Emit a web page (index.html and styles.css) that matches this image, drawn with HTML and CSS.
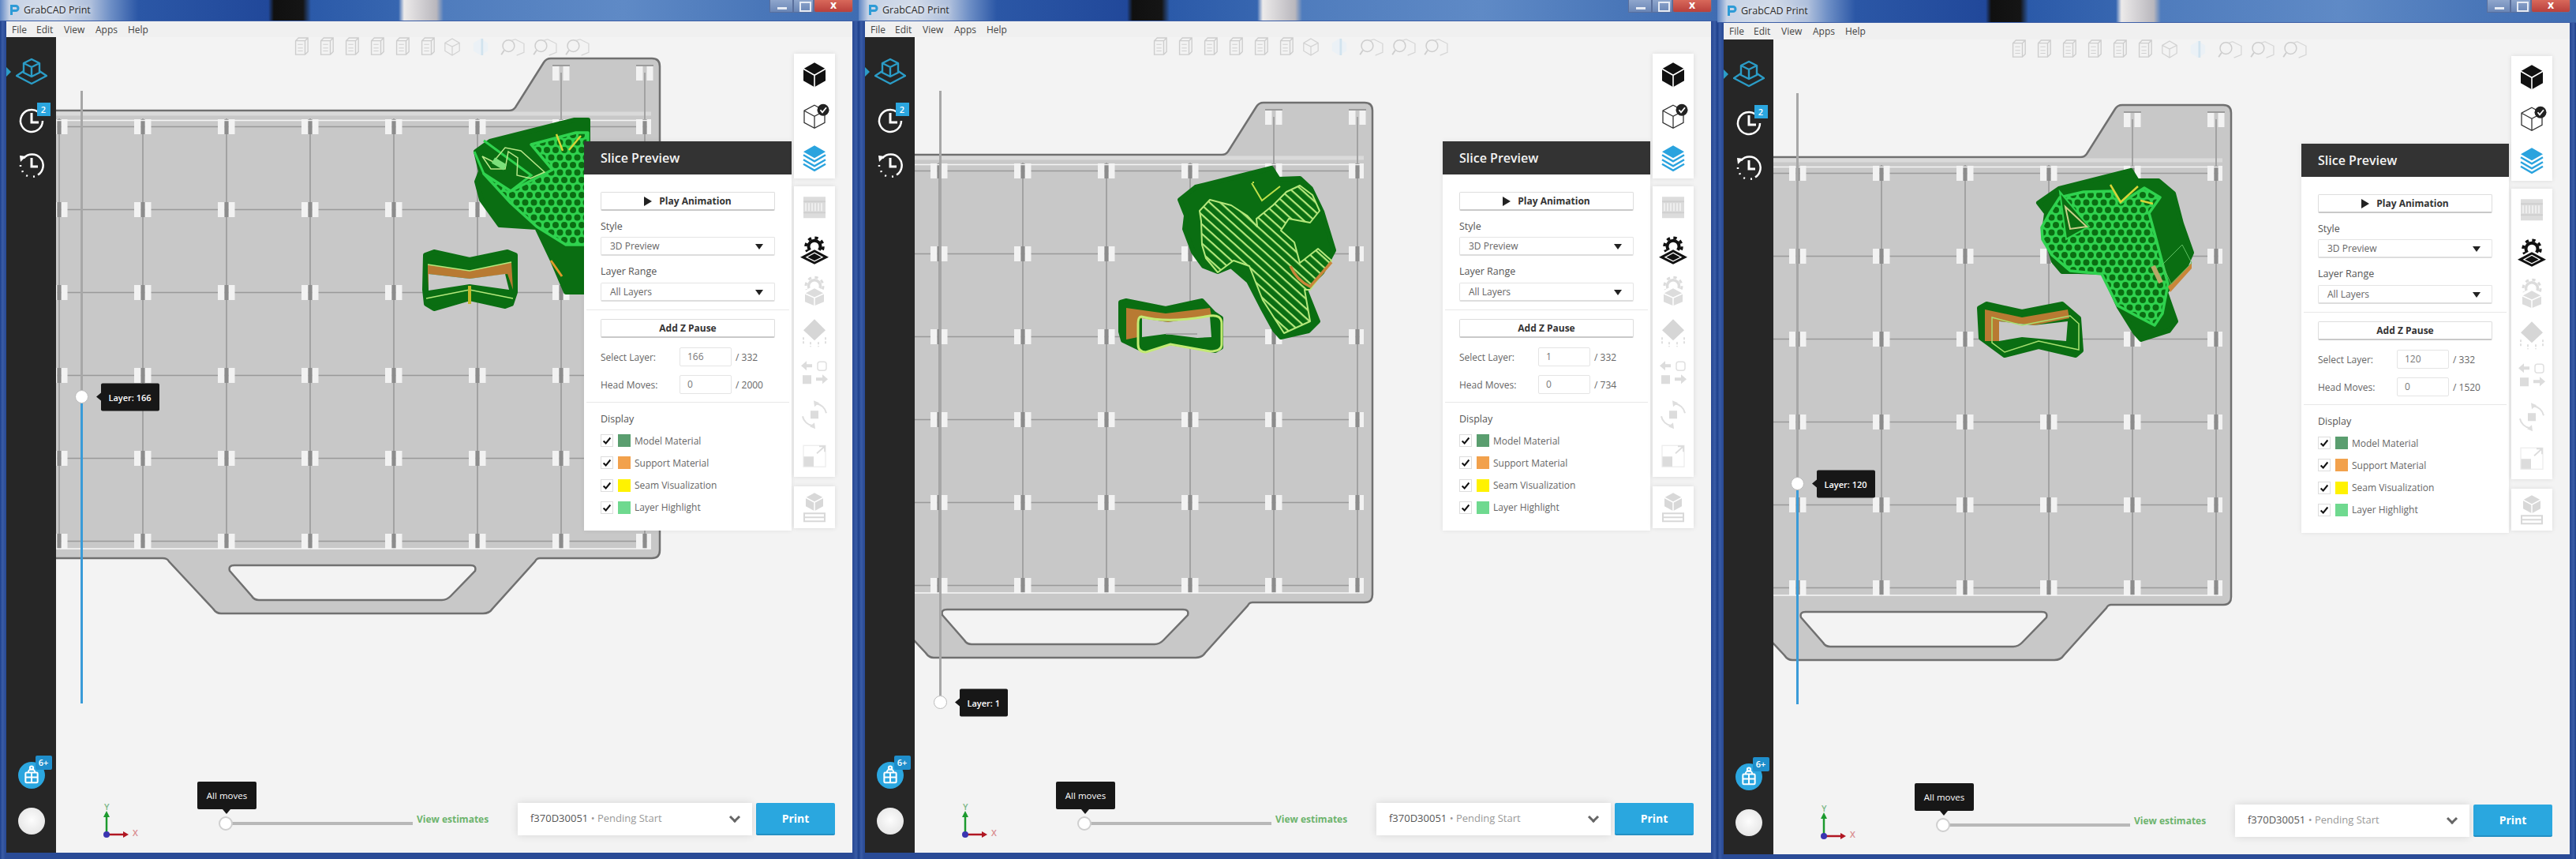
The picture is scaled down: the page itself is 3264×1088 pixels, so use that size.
FILE: index.html
```html
<!DOCTYPE html>
<html lang="en">
<head>
<meta charset="utf-8">
<title>GrabCAD Print</title>
<link rel="stylesheet" href="styles.css">
</head>
<body>
<svg class="defs" aria-hidden="true">
  <defs>
    <pattern id="grid" patternUnits="userSpaceOnUse" x="22" y="108" width="106" height="105">
      <rect width="106" height="105" fill="#c8c8c8"/>
      <path d="M0 52.5H106" stroke="#9a9a9a" stroke-width="1.5"/>
      <path d="M53 0V105" stroke="#a2a2a2" stroke-width="2"/>
      <rect x="42" y="43" width="8.5" height="19" fill="#f2f2f2"/>
      <rect x="55.5" y="43" width="8" height="19" fill="#f2f2f2"/>
      <rect x="50.5" y="43" width="5" height="19" fill="#8c8c8c"/>
    </pattern>
    <pattern id="honey" patternUnits="userSpaceOnUse" width="11" height="19">
      <rect width="11" height="19" fill="#2fd24e"/>
      <circle cx="0" cy="0" r="4" fill="#0a6e12"/><circle cx="11" cy="0" r="4" fill="#0a6e12"/>
      <circle cx="5.5" cy="9.5" r="4" fill="#0a6e12"/>
      <circle cx="0" cy="19" r="4" fill="#0a6e12"/><circle cx="11" cy="19" r="4" fill="#0a6e12"/>
    </pattern>
    <pattern id="hatch" patternUnits="userSpaceOnUse" width="9" height="9" patternTransform="rotate(42)">
      <rect width="9" height="9" fill="#0a6e12"/>
      <rect width="9" height="2.2" fill="#b5e87c"/>
    </pattern>
    <g id="plate">
      <path fill="#c8c8c8" stroke="#707070" stroke-width="2.5" fill-rule="evenodd" d="M-260 140H645Q650 140 653 136L689 79Q692 74 698 74H826Q836 74 836 84V697Q836 707 826 707H684Q680 707 678 711L624 771Q620 777 612 777H280Q274 777 270 771L214 711Q212 707 206 707H-260ZM297 716H596Q604 716 602 723L571 755Q566 760 560 760H328Q322 760 319 755L291 723Q289 716 297 716Z"/>
      <rect x="-260" y="150" width="1085" height="546" fill="url(#grid)"/>
      <path d="M-260 144H825" stroke="#dadada" stroke-width="5"/>
      <path d="M-260 152.500H825" stroke="#f4f4f4" stroke-width="1.500"/>
      <path d="M-260 695H825" stroke="#f7f7f7" stroke-width="1.500"/>
      <path d="M711 92V150M817 92V150" stroke="#a2a2a2" stroke-width="2"/>
      <path d="M700 83H722M806 83H828" stroke="#8c8c8c" stroke-width="1.500"/>
      <rect x="700" y="84" width="8.500" height="18" fill="#f2f2f2"/><rect x="713.500" y="84" width="8" height="18" fill="#f2f2f2"/>
      <rect x="806" y="84" width="8.500" height="18" fill="#f2f2f2"/><rect x="819.500" y="84" width="8" height="18" fill="#f2f2f2"/>
    </g>

    <symbol id="i-platform" viewBox="0 0 40 40"><g fill="none" stroke="#2b9cc6" stroke-width="2.4" stroke-linejoin="round"><path d="M10 20 1 26 20 36 39 26 30 20"/><path d="M20 5 30 10V22L20 27 10 22V10ZM10 10 20 15 30 10M20 15V27"/></g></symbol>
    <symbol id="i-clock" viewBox="0 0 40 40"><g fill="none" stroke="#fff" stroke-width="2.500"><path d="M28 8.500A14 14 0 1 0 34 20"/><path d="M20 10V22H29" stroke-width="3"/></g></symbol>
    <symbol id="i-history" viewBox="0 0 40 40"><g fill="none" stroke="#fff" stroke-width="2.500"><path d="M10 10.500A14 14 0 1 1 28 31.500"/><path d="M24 33.500 20 34M15 33 13 32M9 28 8 26M6 21V19" stroke-dasharray="2 2"/><path d="M20 10V21H28" stroke-width="3"/></g><path d="M5 7 13 8 6 15Z" fill="#fff"/></symbol>
    <symbol id="i-basket" viewBox="0 0 40 40"><g fill="none" stroke="#fff" stroke-width="2.400"><rect x="11" y="16" width="18" height="15" rx="1.500"/><path d="M11 23H29M20 16V31M15 16A5 5 0 0 1 25 16"/><circle cx="20" cy="9" r="2.500"/></g></symbol>

    <symbol id="i-cube" viewBox="0 0 40 40"><path d="M20 5 34 13V28L20 36 6 28V13Z" fill="#111"/><path d="M6 13 20 21 34 13M20 21V36" fill="none" stroke="#fff" stroke-width="1.600"/></symbol>
    <symbol id="i-cubecheck" viewBox="0 0 40 40"><path d="M20 6 33 13V28L20 35 7 28V13ZM7 13 20 20 33 13M20 20V35" fill="none" stroke="#333" stroke-width="1.300"/><circle cx="31" cy="12" r="7.500" fill="#222"/><path d="M27.500 12 30 15 35 9" fill="none" stroke="#fff" stroke-width="1.800"/></symbol>
    <symbol id="i-layers" viewBox="0 0 40 40"><path d="M20 5 34 13 20 21 6 13Z" fill="#2aa3de"/><g fill="none" stroke="#2aa3de" stroke-width="2.400"><path d="M6 17 20 25 34 17M6 23 20 31 34 23M6 28.500 20 36.500 34 28.500"/></g></symbol>
    <symbol id="i-bar" viewBox="0 0 40 40"><path d="M6 7H34V34H6Z" fill="#dcdcdc"/><path d="M6 13H34M6 27H34" stroke="#cfcfcf" stroke-width="2"/><path d="M9 15V25M13 15V25M17 15V25M21 15V25M25 15V25M29 15V25" stroke="#f4f4f4" stroke-width="1.500"/></symbol>
    <symbol id="i-gearplate" viewBox="0 0 40 40"><circle cx="20" cy="17" r="7.500" fill="none" stroke="#111" stroke-width="4"/><circle cx="20" cy="17" r="11" fill="none" stroke="#111" stroke-width="3.500" stroke-dasharray="4.300 4.340"/><path d="M20 18 0 30 20 40 40 30Z" fill="#fff"/><path d="M20 21 2 30.500 20 39.500 38 30.500Z" fill="#111"/><path d="M20 25 10 30.500 20 35.500 30 30.500Z" fill="none" stroke="#fff" stroke-width="1.300"/></symbol>
    <symbol id="i-gearcube" viewBox="0 0 40 40"><circle cx="20" cy="15" r="7.500" fill="none" stroke="#dcdcdc" stroke-width="3.500"/><circle cx="20" cy="15" r="11" fill="none" stroke="#dcdcdc" stroke-width="3" stroke-dasharray="4.300 4.340"/><path d="M20 14 36 23V38H4V23Z" fill="#fff"/><path d="M20 18 32 24.500V35L20 40 8 35V24.500Z" fill="#dcdcdc"/><path d="M8 24.500 20 30 32 24.500M20 30V40" fill="none" stroke="#fff" stroke-width="1.500"/></symbol>
    <symbol id="i-diamond" viewBox="0 0 40 40"><path d="M20 4 34 18 20 31 6 18Z" fill="#d6d6d6"/><path d="M6 27V36M15 33V39M25 33V39M34 27V36" stroke="#e0e0e0" stroke-width="2" stroke-dasharray="3 2"/></symbol>
    <symbol id="i-swap" viewBox="0 0 40 40"><g fill="#dcdcdc"><rect x="5" y="23" width="11" height="11"/><path d="M3 11 10 5V9H17V13H10V17ZM37 28 30 22V26H22V30H30V34Z"/></g><rect x="24" y="6" width="11" height="11" rx="3" fill="none" stroke="#e0e0e0" stroke-width="1.500"/></symbol>
    <symbol id="i-rotate" viewBox="0 0 40 40"><rect x="15" y="15" width="10" height="10" fill="#dcdcdc"/><g fill="none" stroke="#dedede" stroke-width="2"><path d="M22 6A15 15 0 0 1 35 18M18 34A15 15 0 0 1 5 22"/></g><path d="M19 2 26 5 20 10ZM21 38 14 35 20 30Z" fill="#dedede"/></symbol>
    <symbol id="i-scale" viewBox="0 0 40 40"><rect x="6" y="21" width="13" height="13" fill="#dcdcdc"/><rect x="6" y="7" width="28" height="27" fill="none" stroke="#ececec" stroke-width="1.200"/><path d="M23 17 33 8M26 8H33V15" fill="none" stroke="#dcdcdc" stroke-width="1.800"/></symbol>
    <symbol id="i-cubetray" viewBox="0 0 40 40"><path d="M20 2 31 8V19L20 25 9 19V8Z" fill="#d8d8d8"/><path d="M9 8 20 14 31 8M20 14V25" stroke="#fff" stroke-width="1.500" fill="none"/><rect x="7" y="28" width="26" height="10" fill="none" stroke="#d8d8d8" stroke-width="2"/><path d="M7 33H33" stroke="#d8d8d8" stroke-width="2"/></symbol>

    <symbol id="t-box" viewBox="0 0 24 28"><g fill="none" stroke="#b5b5b5" stroke-width="1.500"><path d="M5 6 9 2H22V21L18 25H5ZM5 6H18V25M18 6 22 2"/><path d="M8 11H15M8 16H15M8 20H15" stroke-width="1"/></g></symbol>
    <symbol id="t-hex" viewBox="0 0 24 28"><path d="M12 3 22 9V20L12 26 2 20V9ZM2 9 12 14 22 9M12 14V26" fill="none" stroke="#bcbcbc" stroke-width="1.300"/></symbol>
    <symbol id="t-blue" viewBox="0 0 24 28"><path d="M12 3 22 9V20L12 26 2 20V9Z" fill="#e6f1f8"/><path d="M14 3V26" stroke="#bcd9ec" stroke-width="3"/></symbol>
    <symbol id="t-find" viewBox="0 0 34 28"><circle cx="11" cy="13" r="8" fill="none" stroke="#b5b5b5" stroke-width="1.600"/><path d="M5 19 1 25" stroke="#b5b5b5" stroke-width="2"/><path d="M20 4 32 10V22L22 26M20 4 14 6" fill="none" stroke="#c2c2c2" stroke-width="1.300"/></symbol>
    <symbol id="i-logo" viewBox="0 0 16 16"><path d="M3 2H10A4.500 4.500 0 0 1 10 11H6V15H3ZM6 5V8H10A1.500 1.500 0 0 0 10 5Z" fill="#2e9bd6"/></symbol>
    <symbol id="i-check" viewBox="0 0 16 16"><path d="M3 8.500 6.500 12 13 4" fill="none" stroke="#111" stroke-width="2.300"/></symbol>
    <symbol id="i-axes" viewBox="0 0 65 50"><g font-family="'Open Sans',sans-serif" font-size="11" font-weight="600"><text x="11" y="14" fill="#7fb98a">Y</text><text x="47" y="47" fill="#d98b8f">X</text></g><path d="M14 45V20" stroke="#1c9a2e" stroke-width="2.500"/><path d="M14 15 18 23H10Z" fill="#1c9a2e"/><path d="M14 45H37" stroke="#b01622" stroke-width="2.500"/><path d="M42 45 35 41V49Z" fill="#b01622"/><circle cx="14" cy="45" r="4" fill="#3a35b0"/></symbol>
  </defs>
</svg>

<main class="desk">

<!-- WINDOW 1 -->
<section class="win">
  <header class="title"><svg class="logo"><use href="#i-logo"/></svg><span class="title-text">GrabCAD Print</span>
    <div class="ctl"><span class="ctl-min"></span><span class="ctl-max"></span><span class="ctl-close">x</span></div></header>
  <div class="client">
    <nav class="menu"><span>File</span><span>Edit</span><span>View</span><span>Apps</span><span>Help</span></nav>
    <div class="main">
      <aside class="side">
        <span class="active-mark"></span>
        <svg class="side-i"><use href="#i-platform"/></svg>
        <div class="side-i rel"><svg class="fill"><use href="#i-clock"/></svg><b class="badge">2</b></div>
        <svg class="side-i"><use href="#i-history"/></svg>
        <div class="basket"><svg class="fill"><use href="#i-basket"/></svg><b class="badge wide">6+</b></div>
        <div class="avatar"></div>
      </aside>
      <div class="canvas">
        <svg class="art" viewBox="71 47 1009 1033">
          <use href="#plate"/>
          <path class="body" d="M603 192 621 179 728 152 745 152V370H717L700 330 680 288 633 285 610 253 604 230 609 217Z"/>
          <path d="M673 183 730 168H745V310H717L680 287 647 257 613 220 647 242 700 215Z" fill="url(#honey)" stroke="#2fd24e" stroke-width="3.500" stroke-linejoin="round"/>
          <path d="M601 192 613 220M613 178 673 222 647 242" fill="none" stroke="#2fd24e" stroke-width="3"/>
          <path d="M611 198 625 205 640 187 660 191 690 218 672 226 655 222 656 200 644 192 640 214 622 214Z" fill="none" stroke="#b9e88a" stroke-width="1.500"/>
          <path d="M625 203 640 212" stroke="#7be07a" stroke-width="8"/>
          <path d="M705 170 713 191M721 190 736 172" stroke="#d8d438" stroke-width="2.500"/>
          <path class="body" d="M539 323 550 319 595 329 643 319 653 323V370L648 385 640 388 595 378 550 391 540 385 538 367Z"/>
          <path d="M542 335 595 343 648 332 650 367 643 347 595 353 543 347 542 367Z" fill="#b87a32"/>
          <path d="M543 347 595 353 640 347 645 367 595 360 543 368Z" fill="#c8c8c8"/>
          <path d="M542 335 595 343 648 332M540 378 595 367 650 378" fill="none" stroke="#b5e87c" stroke-width="1.600"/>
          <path d="M595 362V385" stroke="#c4b92c" stroke-width="4"/>
          <path d="M698 330 712 350" stroke="#e09a2a" stroke-width="3"/>
        </svg>
        <div class="topbar">
          <svg class="tb"><use href="#t-box"/></svg><svg class="tb"><use href="#t-box"/></svg><svg class="tb"><use href="#t-box"/></svg><svg class="tb"><use href="#t-box"/></svg><svg class="tb"><use href="#t-box"/></svg><svg class="tb"><use href="#t-box"/></svg><svg class="tb"><use href="#t-hex"/></svg><svg class="tb tb-gap"><use href="#t-blue"/></svg><svg class="tb-w tb-gap"><use href="#t-find"/></svg><svg class="tb-w"><use href="#t-find"/></svg><svg class="tb-w"><use href="#t-find"/></svg>
        </div>
        <div class="layer">
          <span class="seg s1a"></span>
          <span class="thumb"><span class="tip">Layer: 166</span></span>
          <span class="seg blue s1b"></span>
        </div>
        <div class="panel">
          <h2 class="panel-h">Slice Preview</h2>
          <div class="panel-b">
            <button class="btn"><i class="play"></i>Play Animation</button>
            <label class="lbl">Style</label>
            <div class="sel">3D Preview<i class="caret"></i></div>
            <label class="lbl">Layer Range</label>
            <div class="sel sel2">All Layers<i class="caret"></i></div>
            <hr class="rule">
            <button class="btn">Add Z Pause</button>
            <div class="nrow"><span class="nlbl">Select Layer:</span><span class="nin">166</span><span>/ 332</span></div>
            <div class="nrow n2"><span class="nlbl">Head Moves:</span><span class="nin">0</span><span>/ 2000</span></div>
            <hr class="rule">
            <label class="lbl disp">Display</label>
            <div class="chk"><span class="box"><svg class="fill"><use href="#i-check"/></svg></span><i class="sw c-model"></i>Model Material</div>
            <div class="chk"><span class="box"><svg class="fill"><use href="#i-check"/></svg></span><i class="sw c-sup"></i>Support Material</div>
            <div class="chk"><span class="box"><svg class="fill"><use href="#i-check"/></svg></span><i class="sw c-seam"></i>Seam Visualization</div>
            <div class="chk"><span class="box"><svg class="fill"><use href="#i-check"/></svg></span><i class="sw c-high"></i>Layer Highlight</div>
          </div>
        </div>
        <div class="tools">
          <div class="tgroup"><svg class="ti"><use href="#i-cube"/></svg><svg class="ti"><use href="#i-cubecheck"/></svg><svg class="ti"><use href="#i-layers"/></svg></div>
          <div class="tgroup g2"><svg class="ti"><use href="#i-bar"/></svg><svg class="ti"><use href="#i-gearplate"/></svg><svg class="ti"><use href="#i-gearcube"/></svg><svg class="ti"><use href="#i-diamond"/></svg><svg class="ti"><use href="#i-swap"/></svg><svg class="ti"><use href="#i-rotate"/></svg><svg class="ti"><use href="#i-scale"/></svg></div>
          <div class="tgroup g3"><svg class="ti"><use href="#i-cubetray"/></svg></div>
        </div>
        <div class="bottom">
          <svg class="axes"><use href="#i-axes"/></svg>
          <div class="moves"><span class="mtip">All moves</span><span class="mthumb"></span><span class="mtrack"></span></div>
          <a class="est">View estimates</a>
          <div class="printer"><span class="pname">f370D30051</span><span class="pstat"> • Pending Start</span><i class="chev"></i></div>
          <button class="print">Print</button>
        </div>
      </div>
    </div>
  </div>
</section>

<!-- WINDOW 2 -->
<section class="win">
  <header class="title"><svg class="logo"><use href="#i-logo"/></svg><span class="title-text">GrabCAD Print</span>
    <div class="ctl"><span class="ctl-min"></span><span class="ctl-max"></span><span class="ctl-close">x</span></div></header>
  <div class="client">
    <nav class="menu"><span>File</span><span>Edit</span><span>View</span><span>Apps</span><span>Help</span></nav>
    <div class="main">
      <aside class="side">
        <span class="active-mark"></span>
        <svg class="side-i"><use href="#i-platform"/></svg>
        <div class="side-i rel"><svg class="fill"><use href="#i-clock"/></svg><b class="badge">2</b></div>
        <svg class="side-i"><use href="#i-history"/></svg>
        <div class="basket"><svg class="fill"><use href="#i-basket"/></svg><b class="badge wide">6+</b></div>
        <div class="avatar"></div>
      </aside>
      <div class="canvas">
        <svg class="art" viewBox="71 47 1009 1033">
          <use href="#plate" transform="translate(-185 56)"/>
          <path class="body" d="M407 253 427 237 523 213 532 227 559 226 573 239 587 268 602 317 587 345 566 367 582 407 570 419 535 427 527 418 511 389 494 356 472 337 455 344 437 337 424 319 413 290 415 273Z"/>
          <path d="M432 267 445 253 472 260 492 273 505 287 504 277 525 260 542 243 559 235 575 247 584 267 572 282 545 277 535 292 552 307 559 333 582 315 599 330 572 367H565L572 407 539 422 512 380 495 337 475 330 455 345 440 327 435 310 434 280Z" fill="url(#hatch)" stroke="#b5e87c" stroke-width="2" stroke-linejoin="round"/>
          <path d="M547 337Q555 355 572 363L599 332" fill="none" stroke="#c9863a" stroke-width="3.500"/>
          <path d="M498 232 511 254 534 236M500 232V230" fill="none" stroke="#bfe04a" stroke-width="2"/>
          <path class="body" d="M332 383 339 381 389 391 435 381 450 397 459 403V440L452 444 395 434 362 444 335 431 332 420Z"/>
          <path d="M339 390 389 397 445 390 447 400 392 408 355 403 354 427 339 430Z" fill="#b87a32"/>
          <path d="M359 403 392 408 445 400 447 427 429 428 389 423 359 427Z" fill="#c8c8c8"/>
          <path d="M389 423H429" stroke="#9a9a9a" stroke-width="1.500"/>
          <path d="M358 401Q392 410 445 400 460 398 460 410V436Q460 445 445 445L395 436 364 446Q354 446 354 436V410Q354 401 358 401Z" fill="none" stroke="#c3ea74" stroke-width="3"/>
        </svg>
        <div class="topbar">
          <svg class="tb"><use href="#t-box"/></svg><svg class="tb"><use href="#t-box"/></svg><svg class="tb"><use href="#t-box"/></svg><svg class="tb"><use href="#t-box"/></svg><svg class="tb"><use href="#t-box"/></svg><svg class="tb"><use href="#t-box"/></svg><svg class="tb"><use href="#t-hex"/></svg><svg class="tb tb-gap"><use href="#t-blue"/></svg><svg class="tb-w tb-gap"><use href="#t-find"/></svg><svg class="tb-w"><use href="#t-find"/></svg><svg class="tb-w"><use href="#t-find"/></svg>
        </div>
        <div class="layer">
          <span class="seg s2a"></span>
          <span class="thumb"><span class="tip">Layer: 1</span></span>
        </div>
        <div class="panel">
          <h2 class="panel-h">Slice Preview</h2>
          <div class="panel-b">
            <button class="btn"><i class="play"></i>Play Animation</button>
            <label class="lbl">Style</label>
            <div class="sel">3D Preview<i class="caret"></i></div>
            <label class="lbl">Layer Range</label>
            <div class="sel sel2">All Layers<i class="caret"></i></div>
            <hr class="rule">
            <button class="btn">Add Z Pause</button>
            <div class="nrow"><span class="nlbl">Select Layer:</span><span class="nin">1</span><span>/ 332</span></div>
            <div class="nrow n2"><span class="nlbl">Head Moves:</span><span class="nin">0</span><span>/ 734</span></div>
            <hr class="rule">
            <label class="lbl disp">Display</label>
            <div class="chk"><span class="box"><svg class="fill"><use href="#i-check"/></svg></span><i class="sw c-model"></i>Model Material</div>
            <div class="chk"><span class="box"><svg class="fill"><use href="#i-check"/></svg></span><i class="sw c-sup"></i>Support Material</div>
            <div class="chk"><span class="box"><svg class="fill"><use href="#i-check"/></svg></span><i class="sw c-seam"></i>Seam Visualization</div>
            <div class="chk"><span class="box"><svg class="fill"><use href="#i-check"/></svg></span><i class="sw c-high"></i>Layer Highlight</div>
          </div>
        </div>
        <div class="tools">
          <div class="tgroup"><svg class="ti"><use href="#i-cube"/></svg><svg class="ti"><use href="#i-cubecheck"/></svg><svg class="ti"><use href="#i-layers"/></svg></div>
          <div class="tgroup g2"><svg class="ti"><use href="#i-bar"/></svg><svg class="ti"><use href="#i-gearplate"/></svg><svg class="ti"><use href="#i-gearcube"/></svg><svg class="ti"><use href="#i-diamond"/></svg><svg class="ti"><use href="#i-swap"/></svg><svg class="ti"><use href="#i-rotate"/></svg><svg class="ti"><use href="#i-scale"/></svg></div>
          <div class="tgroup g3"><svg class="ti"><use href="#i-cubetray"/></svg></div>
        </div>
        <div class="bottom">
          <svg class="axes"><use href="#i-axes"/></svg>
          <div class="moves"><span class="mtip">All moves</span><span class="mthumb"></span><span class="mtrack"></span></div>
          <a class="est">View estimates</a>
          <div class="printer"><span class="pname">f370D30051</span><span class="pstat"> • Pending Start</span><i class="chev"></i></div>
          <button class="print">Print</button>
        </div>
      </div>
    </div>
  </div>
</section>

<!-- WINDOW 3 -->
<section class="win win3">
  <header class="title"><svg class="logo"><use href="#i-logo"/></svg><span class="title-text">GrabCAD Print</span>
    <div class="ctl"><span class="ctl-min"></span><span class="ctl-max"></span><span class="ctl-close">x</span></div></header>
  <div class="client">
    <nav class="menu"><span>File</span><span>Edit</span><span>View</span><span>Apps</span><span>Help</span></nav>
    <div class="main">
      <aside class="side">
        <span class="active-mark"></span>
        <svg class="side-i"><use href="#i-platform"/></svg>
        <div class="side-i rel"><svg class="fill"><use href="#i-clock"/></svg><b class="badge">2</b></div>
        <svg class="side-i"><use href="#i-history"/></svg>
        <div class="basket"><svg class="fill"><use href="#i-basket"/></svg><b class="badge wide">6+</b></div>
        <div class="avatar"></div>
      </aside>
      <div class="canvas">
        <svg class="art" viewBox="71 50 1009 1032">
          <use href="#plate" transform="translate(-185 59)"/>
          <path class="body" d="M407 257 433 239 524 216 532 229 559 229 578 245 588 283 601 320 594 336 568 370 581 407 572 419 537 430 529 421 509 389 489 345 457 344 437 344 426 331 414 293 417 270Z"/>
          <path d="M411 288 421 270 434 250 464 243 501 242 511 257 541 238 561 250 547 270 556 303 571 360 564 397 554 412 531 400 507 387 487 347 447 343 424 323 412 303Z" fill="url(#honey)" stroke="#2fd24e" stroke-width="3.500" stroke-linejoin="round"/>
          <path d="M434 243 471 287 442 303Z" fill="#0a6e12" stroke="#2fd24e" stroke-width="2"/>
          <path d="M441 262 447 290 468 287Z" fill="none" stroke="#c9cf8a" stroke-width="2"/>
          <path d="M571 363 601 333V340L574 370Z" fill="#c9863a"/>
          <path d="M552 337 562 358" stroke="#b8a868" stroke-width="6"/>
          <path d="M564 335 589 310 601 333 575 360Z" fill="none" stroke="#5fc062" stroke-width="1"/>
          <path d="M498 234 511 256 533 236M536 254 552 258" fill="none" stroke="#d8d438" stroke-width="2.500"/>
          <path class="body" d="M332 390 341 385 386 395 437 385 458 403 461 444 454 450 407 439 364 450 334 428Z"/>
          <path d="M339 392 386 402 444 392 446 403 401 412 357 407V432H339Z" fill="#b87a32"/>
          <path d="M357 407 401 412 444 407 442 432 386 427 357 432Z" fill="#c8c8c8"/>
          <path d="M348 402 386 412 447 400 458 410V443L407 432 364 446 348 434Z" fill="none" stroke="#a8e070" stroke-width="1.500"/>
        </svg>
        <div class="topbar">
          <svg class="tb"><use href="#t-box"/></svg><svg class="tb"><use href="#t-box"/></svg><svg class="tb"><use href="#t-box"/></svg><svg class="tb"><use href="#t-box"/></svg><svg class="tb"><use href="#t-box"/></svg><svg class="tb"><use href="#t-box"/></svg><svg class="tb"><use href="#t-hex"/></svg><svg class="tb tb-gap"><use href="#t-blue"/></svg><svg class="tb-w tb-gap"><use href="#t-find"/></svg><svg class="tb-w"><use href="#t-find"/></svg><svg class="tb-w"><use href="#t-find"/></svg>
        </div>
        <div class="layer">
          <span class="seg s3a"></span>
          <span class="thumb"><span class="tip">Layer: 120</span></span>
          <span class="seg blue s3b"></span>
        </div>
        <div class="panel">
          <h2 class="panel-h">Slice Preview</h2>
          <div class="panel-b">
            <button class="btn"><i class="play"></i>Play Animation</button>
            <label class="lbl">Style</label>
            <div class="sel">3D Preview<i class="caret"></i></div>
            <label class="lbl">Layer Range</label>
            <div class="sel sel2">All Layers<i class="caret"></i></div>
            <hr class="rule">
            <button class="btn">Add Z Pause</button>
            <div class="nrow"><span class="nlbl">Select Layer:</span><span class="nin">120</span><span>/ 332</span></div>
            <div class="nrow n2"><span class="nlbl">Head Moves:</span><span class="nin">0</span><span>/ 1520</span></div>
            <hr class="rule">
            <label class="lbl disp">Display</label>
            <div class="chk"><span class="box"><svg class="fill"><use href="#i-check"/></svg></span><i class="sw c-model"></i>Model Material</div>
            <div class="chk"><span class="box"><svg class="fill"><use href="#i-check"/></svg></span><i class="sw c-sup"></i>Support Material</div>
            <div class="chk"><span class="box"><svg class="fill"><use href="#i-check"/></svg></span><i class="sw c-seam"></i>Seam Visualization</div>
            <div class="chk"><span class="box"><svg class="fill"><use href="#i-check"/></svg></span><i class="sw c-high"></i>Layer Highlight</div>
          </div>
        </div>
        <div class="tools">
          <div class="tgroup"><svg class="ti"><use href="#i-cube"/></svg><svg class="ti"><use href="#i-cubecheck"/></svg><svg class="ti"><use href="#i-layers"/></svg></div>
          <div class="tgroup g2"><svg class="ti"><use href="#i-bar"/></svg><svg class="ti"><use href="#i-gearplate"/></svg><svg class="ti"><use href="#i-gearcube"/></svg><svg class="ti"><use href="#i-diamond"/></svg><svg class="ti"><use href="#i-swap"/></svg><svg class="ti"><use href="#i-rotate"/></svg><svg class="ti"><use href="#i-scale"/></svg></div>
          <div class="tgroup g3"><svg class="ti"><use href="#i-cubetray"/></svg></div>
        </div>
        <div class="bottom">
          <svg class="axes"><use href="#i-axes"/></svg>
          <div class="moves"><span class="mtip">All moves</span><span class="mthumb"></span><span class="mtrack"></span></div>
          <a class="est">View estimates</a>
          <div class="printer"><span class="pname">f370D30051</span><span class="pstat"> • Pending Start</span><i class="chev"></i></div>
          <button class="print">Print</button>
        </div>
      </div>
    </div>
  </div>
</section>

</main>
</body>
</html>
```

FILE: styles.css
```css
* { box-sizing: border-box; }
html, body { margin: 0; padding: 0; }
body {
  width: 3264px; height: 1088px; overflow: hidden;
  background: #274a94;
  font-family: "Open Sans", "Liberation Sans", sans-serif;
  font-size: 12px; color: #555;
}
.defs { position: absolute; width: 0; height: 0; }
.desk { display: flex; width: 3264px; height: 1088px; }
.fill { display: block; width: 100%; height: 100%; }
i { font-style: normal; }
.body { fill: #0a6e12; stroke: #0a6e12; stroke-width: 6; stroke-linejoin: round; }

/* window chrome */
.win {
  width: 1088px; height: 1088px; flex: none;
  display: flex; flex-direction: column;
  padding: 0 8px 8px;
  background: linear-gradient(90deg, #1d3f8a 0, #3a5ca6 3px, #2a4b96 7px, #2a4b96 1081px, #3a5ca6 1085px, #1d3f8a 1088px);
  position: relative;
}
.title {
  height: 27px; flex: none; margin: 0 -8px;
  padding: 0 0 2px 10px;
  display: flex; align-items: center;
  color: #2a2a2a; font-size: 12.5px;
  background: linear-gradient(90deg, #5f86c4 0, #c7d3e6 12px, #d2dbe9 70px, #aebfdc 115px, #6e8fc6 140px, #2b57a6 175px, #21489a 340px, #101010 347px, #151515 384px, #2b5aa9 394px, #3766b0 505px, #eceaea 512px, #b9b7bd 553px, #4f7cbd 562px, #5f8ac6 790px, #4a77b9 960px, #3f6cb2 1088px);
  border-bottom: 1px solid #3c5ea6;
}
.logo { width: 16px; height: 16px; margin-right: 4px; flex: none; }
.title-text { text-shadow: 0 0 6px #fff; }
.ctl { margin-left: auto; margin-right: 7px; align-self: flex-start; display: flex; height: 16px; }
.ctl span { display: block; height: 16px; border: 1px solid #5a6f9c; border-top: 0; }
.ctl-min { width: 30px; background: linear-gradient(#8fa6cc, #6a86b6); position: relative; }
.ctl-min::after { content: ""; position: absolute; left: 9px; top: 9px; width: 12px; height: 3px; background: #e6ebf4; }
.ctl-max { width: 26px; background: linear-gradient(#8fa6cc, #6a86b6); position: relative; }
.ctl-max::after { content: ""; position: absolute; left: 7px; top: 2px; width: 11px; height: 9px; border: 2px solid #e6ebf4; }
.ctl-close { width: 50px; background: linear-gradient(#d8685a, #b9403c); color: #fff; font-weight: 700; font-size: 14px; line-height: 12px; text-align: center; border-radius: 0 0 3px 3px; }
.client { flex: 1; min-height: 0; display: flex; flex-direction: column; background: #f3f3f3; }
.menu {
  height: 20px; flex: none; background: #f0f0f0;
  display: flex; align-items: center;
  padding-left: 7px; color: #444; font-size: 12px;
}
.menu span:nth-child(1) { width: 31px; }
.menu span:nth-child(2) { width: 35px; }
.menu span:nth-child(3) { width: 40px; }
.menu span:nth-child(4) { width: 41px; }
.main { flex: 1; min-height: 0; display: flex; }

/* window 3 sits slightly lower */
.win3 { padding-bottom: 6px; }
.win3 .title { height: 29px; }
.win3 .menu { height: 21px; }
.win3 .layer { left: 21px; }

/* left sidebar */
.side {
  width: 63px; flex: none; background: #262626;
  display: flex; flex-direction: column; align-items: center;
  padding: 23px 0 23px; position: relative;
}
.active-mark {
  position: absolute; left: 0; top: 38px;
  border-left: 6px solid #2b9cc6; border-top: 6px solid transparent; border-bottom: 6px solid transparent;
}
.side-i { display: block; width: 40px; height: 40px; flex: none; margin-bottom: 20px; }
.rel { position: relative; margin-top: 3px; margin-bottom: 17px; }
.badge {
  position: absolute; right: -4px; top: -3px; width: 17px; height: 17px;
  background: #2ba6df; color: #fff; font-size: 11px; font-weight: 600; line-height: 17px; text-align: center;
}
.basket { margin-top: auto; width: 34px; height: 34px; border-radius: 50%; background: #2ba6df; position: relative; }
.basket .wide { width: 21px; height: 18px; right: -9px; top: -8px; line-height: 18px; border-radius: 2px; background: #1f8ecb; }
.avatar { width: 34px; height: 34px; margin-top: 24px; border-radius: 50%; background: radial-gradient(circle at 50% 45%, #fdfdfd, #e6e6e6 75%, #c9c9c9); }

/* canvas */
.canvas { flex: 1; min-width: 0; position: relative; overflow: hidden; background: #f3f3f3; }
.art { position: absolute; left: 0; top: 0; width: 1009px; height: 100%; }
.topbar { position: absolute; left: 299px; top: -1px; display: flex; gap: 10px; height: 26px; opacity: .6; }
.tb { display: block; width: 22px; height: 26px; }
.tb-w { display: block; width: 32px; height: 26px; margin-left: -1px; }
.tb-gap { margin-left: 4px; }

/* layer slider */
.layer { position: absolute; left: 23px; top: 68px; width: 18px; display: flex; flex-direction: column; align-items: center; }
.seg { display: block; width: 3px; background: #a7a7a7; }
.seg.blue { background: #3a9bd8; }
.s1a { height: 379px; } .s1b { height: 380px; }
.s2a { height: 766px; }
.s3a { height: 486px; } .s3b { height: 271px; }
.thumb { display: block; width: 17px; height: 17px; flex: none; border-radius: 50%; background: #fff; border: 1px solid #bbb; position: relative; }
.tip {
  position: absolute; left: 32px; top: 50%; transform: translateY(-50%);
  height: 35px; padding: 0 10px; display: flex; align-items: center;
  background: #171717; color: #fff; font-size: 11px; font-weight: 600; white-space: nowrap; border-radius: 2px;
}
.tip::before { content: ""; position: absolute; left: -6px; top: 12px; border-right: 6px solid #171717; border-top: 5px solid transparent; border-bottom: 5px solid transparent; }

/* slice panel */
.panel { position: absolute; left: 669px; top: 132px; width: 263px; height: 493px; background: #fff; box-shadow: 0 0 6px rgba(0,0,0,.08); }
.panel-h { margin: 0; height: 42px; background: #333; color: #f4f4f4; font-size: 16px; font-weight: 600; line-height: 42px; padding-left: 21px; }
.panel-b { padding: 22px 21px 0; display: flex; flex-direction: column; }
.btn {
  height: 24px; background: #fff; border: 1px solid #ddd; border-bottom: 2px solid #c9c9c9; border-radius: 2px;
  font: 700 12px "Open Sans", sans-serif; color: #333;
  display: flex; align-items: center; justify-content: center; padding: 0;
}
.play { width: 0; height: 0; margin-right: 9px; border-left: 10px solid #222; border-top: 6px solid transparent; border-bottom: 6px solid transparent; }
.lbl { display: block; height: 16px; line-height: 16px; margin: 12px 0 5px; font-size: 12.5px; color: #555; }
.sel { height: 24px; border: 1px solid #e4e4e4; border-bottom: 2px solid #ddd; border-radius: 2px; padding-left: 11px; line-height: 22px; font-size: 12px; color: #666; position: relative; }
.sel2 { height: 24px; }
.panel-b .sel2 { margin-top: 1px; }
.caret { position: absolute; right: 14px; top: 8px; border-top: 7px solid #222; border-left: 5px solid transparent; border-right: 5px solid transparent; }
.rule { border: 0; height: 1px; background: #e8e8e8; margin: 10px -18px 11px; }
.nrow { display: flex; align-items: center; height: 24px; margin-top: 12px; color: #666; font-size: 12px; }
.n2 { margin-top: 11px; }
.nlbl { width: 100px; flex: none; color: #666; }
.nin { width: 66px; height: 24px; margin-right: 5px; border: 1px solid #e4e4e4; border-radius: 2px; line-height: 22px; padding-left: 9px; color: #777; }
.disp { margin: 2px 0 10px; }
.chk { display: flex; align-items: center; height: 18px; margin-bottom: 10.3px; color: #666; font-size: 12px; }
.box { width: 16px; height: 16px; border: 1px solid #ddd; margin-right: 6px; flex: none; }
.sw { width: 16px; height: 16px; margin-right: 5px; flex: none; }
.c-model { background: #5a9e6f; } .c-sup { background: #f2a14c; } .c-seam { background: #fff200; } .c-high { background: #6fd98f; }

/* right tools */
.tools { position: absolute; right: 22px; top: 21px; width: 52px; display: flex; flex-direction: column; }
.tgroup { background: #fff; display: flex; flex-direction: column; align-items: center; box-shadow: 0 0 6px rgba(0,0,0,.1); }
.g2 { margin-top: 10.5px; }
.g3 { margin-top: 12.5px; }
.ti { display: block; width: 40px; height: 52.5px; flex: none; }

/* bottom bar */
.bottom { position: absolute; left: 50px; right: 22px; bottom: 18px; display: flex; align-items: flex-end; }
.axes { width: 65px; height: 50px; flex: none; }
.moves { width: 246px; height: 18px; margin: 0 0 10px 91px; position: relative; flex: none; }
.mthumb { position: absolute; left: 0; top: 0; width: 18px; height: 18px; border-radius: 50%; background: #fff; border: 2px solid #cfcfcf; z-index: 1; }
.mtrack { position: absolute; left: 16px; right: 0; top: 7px; height: 4px; background: #b8b8b8; }
.mtip { position: absolute; left: -27px; bottom: 27px; width: 75px; height: 35px; background: #171717; color: #fff; font-size: 11.5px; font-weight: 500; line-height: 35px; text-align: center; border-radius: 2px; }
.mtip::after { content: ""; position: absolute; left: 32px; top: 35px; border-top: 6px solid #171717; border-left: 5px solid transparent; border-right: 5px solid transparent; }
.est { width: 90px; margin: 0 0 16px 5px; flex: none; color: #6db36d; font-size: 12px; font-weight: 700; line-height: 16px; white-space: nowrap; }
.printer { width: 297px; height: 41px; margin: 0 0 4px 38px; flex: none; background: #fff; box-shadow: 0 0 10px rgba(0,0,0,.12); padding-left: 16px; font-size: 13px; line-height: 39px; position: relative; white-space: pre; }
.pname { color: #555; } .pstat { color: #999; }
.chev { position: absolute; right: 17px; top: 13px; width: 10px; height: 10px; border-right: 3px solid #666; border-bottom: 3px solid #666; transform: rotate(45deg); }
.print { width: 100px; height: 41px; margin: 0 0 4px 5px; flex: none; border: 0; border-bottom: 2px solid #2390c4; border-radius: 2px; background: #2aa7df; color: #fff; font: 700 14px "Open Sans", sans-serif; }
```
